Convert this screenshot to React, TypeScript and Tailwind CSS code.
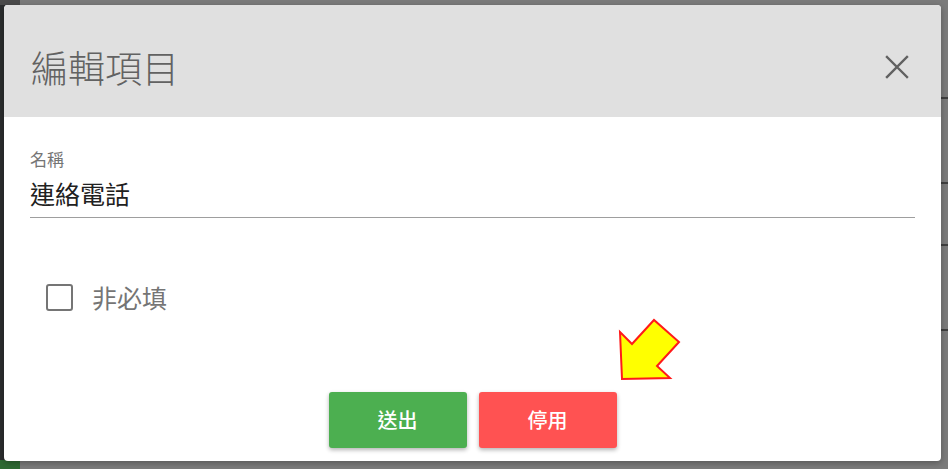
import React from 'react';

const cjk = { fontFamily: '"Noto Sans CJK TC", "Noto Sans", sans-serif' };

function CloseIcon() {
  return (
    <svg width="24" height="24" viewBox="0 0 24 24" className="shrink-0">
      <path d="M2 2 L22 22 M22 2 L2 22" stroke="#616161" strokeWidth="2.4" strokeLinecap="square" />
    </svg>
  );
}

function PointerArrow() {
  // yellow callout arrow drawn over the dialog
  return (
    <svg
      width="948"
      height="469"
      viewBox="0 0 948 469"
      className="pointer-events-none absolute left-0 top-0"
    >
      <polygon
        points="622,379 620,332 632,344 654,320 679,342 657,366 670,378"
        fill="#ffff00"
        stroke="#ff1a1a"
        strokeWidth="2"
        strokeLinejoin="miter"
      />
    </svg>
  );
}

export default function App() {
  return (
    <div className="relative h-[469px] w-[948px] overflow-hidden bg-[#7b7b7b]" style={cjk}>
      {/* background page peeking through */}
      <div className="absolute left-0 top-0 h-full w-[5px] bg-[#2b2d2e]" />
      <div className="absolute left-0 top-0 h-[5px] w-[20px] bg-[#4a4a4a]" />
      <div className="absolute bottom-0 left-0 h-[9px] w-[20px] bg-[#2e6b33]" />
      <div className="absolute right-0 top-[97px] h-[2px] w-[7px] bg-[#3f3f3f]" />
      <div className="absolute right-0 top-[182px] h-[2px] w-[7px] bg-[#3f3f3f]" />
      <div className="absolute right-0 top-[244px] h-[2px] w-[7px] bg-[#3f3f3f]" />
      <div className="absolute right-0 top-[329px] h-[2px] w-[7px] bg-[#3f3f3f]" />

      <div className="relative flex h-full w-full pb-[8px] pl-[4px] pr-[7px] pt-[5px]">
        <div className="flex w-full flex-col overflow-hidden rounded-[4px] bg-white shadow-[0_2px_6px_rgba(0,0,0,0.3)]">
          {/* Header */}
          <div className="flex h-[112px] shrink-0 items-center justify-between bg-[#e0e0e0] pl-[27px] pr-[32px] pt-[12px]">
            <h2 className="text-[37px] font-light leading-[48px] text-[#626262]">編輯項目</h2>
            <CloseIcon />
          </div>

          {/* Body */}
          <div className="flex flex-1 flex-col px-[26px] pt-[32px]">
            <label className="text-[17px] leading-[20px] text-[#757575]">名稱</label>
            <div className="border-b border-[#9e9e9e] pb-[8px] pt-[8px]">
              <span className="block text-[25px] leading-[32px] text-[#212121]">連絡電話</span>
            </div>

            <div className="mt-[59px] flex h-[40px] items-center gap-[19px] pl-[16px]">
              <span className="block h-[27px] w-[27px] rounded-[3px] border-[2.5px] border-[#757575]" />
              <span className="text-[25px] leading-[32px] text-[#757575]">非必填</span>
            </div>

            <div className="mt-auto flex justify-center gap-[12px] pb-[13px]">
              <button className="flex h-[56px] w-[138px] items-center justify-center rounded-[3px] bg-[#4caf50] text-[20px] font-medium text-white shadow-[0_2px_4px_rgba(0,0,0,0.3)]">
                送出
              </button>
              <button className="flex h-[56px] w-[138px] items-center justify-center rounded-[3px] bg-[#ff5252] text-[20px] font-medium text-white shadow-[0_2px_4px_rgba(0,0,0,0.3)]">
                停用
              </button>
            </div>
          </div>
        </div>
      </div>

      <PointerArrow />
    </div>
  );
}
